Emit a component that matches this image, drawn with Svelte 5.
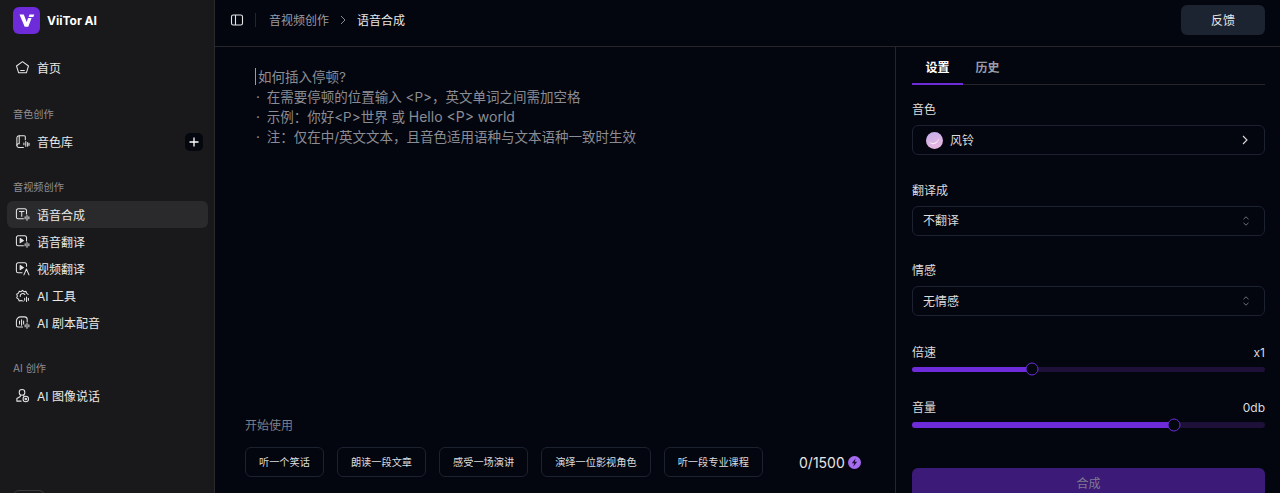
<script>
	const presets = ["听一个笑话", "朗读一段文章", "感受一场演讲", "演绎一位影视角色", "听一段专业课程"];
	const selects = [
		{ label: "翻译成", value: "不翻译" },
		{ label: "情感", value: "无情感" }
	];
	const sliders = [
		{ label: "倍速", value: "x1", pct: 34 },
		{ label: "音量", value: "0db", pct: 74.2 }
	];
	const tts = [
		{ name: "语音合成", icon: "T", active: true },
		{ name: "语音翻译", icon: "play" },
		{ name: "视频翻译", icon: "video" },
		{ name: "AI 工具", icon: "tool" },
		{ name: "AI 剧本配音", icon: "script" }
	];
</script>

<div class="app">
	<aside class="sidebar">
		<div class="brand">
			<div class="logo">
				<svg viewBox="0 0 27 27" width="27" height="27">
					<path d="M6.500 7.500h4.300l2.900 7.500 1.400-4h3.500l-3.300 8.800h-3.600z" fill="#fff" />
					<path d="M16.500 7.500h4.800l-.9 2.500h-4.800z" fill="#fff" />
				</svg>
			</div>
			<span class="brand-name">ViiTor AI</span>
		</div>

		<nav class="nav home">
			<div class="item">
				<svg class="ico" viewBox="0 0 16 16"><path d="M8 1.800l6.400 4.600-2.300 7.300H3.900L1.600 6.400z" /><path d="M6 11.300h4" /></svg>
				<span>首页</span>
			</div>
		</nav>

		<div class="section first-section">音色创作</div>
		<nav class="nav">
			<div class="item">
				<svg class="ico" viewBox="0 0 16 16"><path d="M11 6V3a1.200 1.200 0 0 0-1.200-1.200H4.500A2.500 2.500 0 0 0 2 4.300v8a2 2 0 0 0 2 2h5" /><path d="M4.500 2v8.500H3.500A1.500 1.500 0 0 0 2 12" /><path d="M9.500 9.500v2M11.500 8v5M13.500 9v4M15 10v2" /></svg>
				<span>音色库</span>
				<span class="plus">
					<svg viewBox="0 0 10 10" width="10" height="10"><path d="M5 .5v9M.5 5h9" stroke="#fff" stroke-width="1.300" /></svg>
				</span>
			</div>
		</nav>

		<div class="section">音视频创作</div>
		<nav class="nav">
			{#each tts as t}
				<div class="item" class:active={t.active}>
					<svg class="ico" viewBox="0 0 16 16">
						{#if t.icon === "T"}
							<path d="M9 12.500H3.300a1.800 1.800 0 0 1-1.800-1.800v-7A1.800 1.800 0 0 1 3.300 1.900h7.200a1.800 1.800 0 0 1 1.800 1.800v3.800" />
							<path d="M4.800 4.800h4.800M7.200 4.800v5" />
							<path d="M10.800 10.500v2M12.800 9v5M14.800 10.500v2" />
						{:else if t.icon === "play"}
							<path d="M9 12.500H3.300a1.800 1.800 0 0 1-1.800-1.800v-7A1.800 1.800 0 0 1 3.300 1.900h7.200a1.800 1.800 0 0 1 1.800 1.800v3.800" />
							<path d="M5.500 4.800v4.400L9 7z" fill="#e6e6e6" />
							<path d="M10.800 10.500v2M12.800 9v5M14.800 10.500v2" />
						{:else if t.icon === "video"}
							<path d="M7.500 12.500H3.300a1.800 1.800 0 0 1-1.800-1.800v-7A1.800 1.800 0 0 1 3.300 1.900h7.200a1.800 1.800 0 0 1 1.800 1.800v2" />
							<path d="M5.500 4.800v4.400L9 7z" fill="#e6e6e6" />
							<path d="M9.500 14.800l2.700-6.300 2.700 6.300" />
						{:else if t.icon === "tool"}
							<path d="M8.800 14l-2.300-.6-2 .4-.8-2-1.900-1.200.7-2-.7-2L3.700 5.500l.8-2 2 .4L8 2.500l1.500 1.400 2.200-.3.800 2.100 1.500 1.200" />
							<path d="M5.500 9a2.800 2.800 0 0 1 5-2" />
							<path d="M10.300 11v2M12.300 9.500v5M14.300 11v2" />
						{:else}
							<path d="M8 12.800H3.300a1.800 1.800 0 0 1-1.800-1.800V6.500A4.500 4.500 0 0 1 6 2h4.200a2.800 2.800 0 0 1 2.800 2.800v2.700" />
							<path d="M4.800 6.500v3M7 5v6M9.200 6.500v3" />
							<path d="M10.800 10.500v2M12.800 9v5M14.800 10.500v2" />
						{/if}
					</svg>
					<span>{t.name}</span>
				</div>
			{/each}
		</nav>

		<div class="section">AI 创作</div>
		<nav class="nav">
			<div class="item">
				<svg class="ico" viewBox="0 0 16 16"><circle cx="7.500" cy="4.700" r="3" /><path d="M5.700 7.600v1.500L2 11.200v2.800h4.500" /><path d="M9.300 7.600v1" /><circle cx="11.500" cy="11.800" r="2.900" /><circle cx="11.500" cy="11.800" r=".8" /></svg>
				<span>AI 图像说话</span>
			</div>
		</nav>

		<div class="stub"></div>
	</aside>

	<div class="content">
		<header class="topbar">
			<svg class="toggle" viewBox="0 0 14 14" width="14" height="14"><rect x="1.500" y="2" width="11" height="10" rx="1.800" /><path d="M5.500 2v10" /></svg>
			<span class="vsep"></span>
			<span class="crumb">音视频创作</span>
			<svg class="crumb-arrow" viewBox="0 0 8 10" width="8" height="10"><path d="M2 1l4 4-4 4" /></svg>
			<span class="crumb current">语音合成</span>
			<button class="feedback">反馈</button>
		</header>

		<div class="body">
			<main class="editor">
				<div class="placeholder">
					<div class="first"><i class="caret"></i>如何插入停顿?</div>
					<div><span class="dot">·</span> 在需要停顿的位置输入 &lt;P&gt;，英文单词之间需加空格</div>
					<div><span class="dot">·</span> 示例：你好&lt;P&gt;世界 或 <span class="latin">Hello &lt;P&gt; world</span></div>
					<div><span class="dot">·</span> 注：仅在中/英文文本，且音色适用语种与文本语种一致时生效</div>
				</div>

				<div class="start">
					<div class="start-title">开始使用</div>
					<div class="start-row">
						{#each presets as p}
							<button class="preset">{p}</button>
						{/each}
						<div class="counter">
							<span>0/1500</span>
							<span class="bolt">
								<svg viewBox="0 0 14 14" width="13" height="13"><circle cx="7" cy="7" r="7" fill="#a56cf0" /><path d="M8.300 2.500L4.200 7.800h2.500L5.700 11.500l4.100-5.300H7.300z" fill="#1c1030" /></svg>
							</span>
						</div>
					</div>
				</div>
			</main>

			<section class="panel">
				<div class="tabs">
					<div class="tab on">设置</div>
					<div class="tab">历史</div>
				</div>

				<div class="field voice">
					<div class="label">音色</div>
					<div class="box">
						<span class="avatar">
							<svg viewBox="0 0 17 17" width="17" height="17"><path d="M3 9.500c2 1.500 4 1.800 5.500 1.300 2-.8 3.500-2.500 5-4.800-1 3.500-3 5.800-5.500 6.300-2 .3-4-.8-5-2.800z" fill="#f6e6f6" /></svg>
						</span>
						<span class="box-text">风铃</span>
						<svg class="chev" viewBox="0 0 8 10" width="8" height="10"><path d="M2 1l4 4-4 4" /></svg>
					</div>
				</div>

				{#each selects as s}
					<div class="field">
						<div class="label">{s.label}</div>
						<div class="box select">
							<span class="box-text">{s.value}</span>
							<svg class="updown" viewBox="0 0 8 12" width="8" height="12"><path d="M1.500 4.200L4 1.800l2.500 2.400M1.500 7.800L4 10.200l2.500-2.400" /></svg>
						</div>
					</div>
				{/each}

				{#each sliders as s}
					<div class="slider">
						<div class="slider-head"><span>{s.label}</span><span>{s.value}</span></div>
						<div class="track">
							<div class="fill" style="width: {s.pct}%"></div>
							<div class="thumb" style="left: {s.pct}%"></div>
						</div>
					</div>
				{/each}

				<button class="submit">合成</button>
			</section>
		</div>
	</div>
</div>

<style>
	:global(body) {
		margin: 0;
		background: #03050f;
		overflow: hidden;
	}
	.app {
		display: flex;
		height: 493px;
		overflow: hidden;
		font-family: Inter, "Noto Sans CJK SC", sans-serif;
		color: #e6e6e6;
		font-size: 12px;
	}
	button {
		font-family: inherit;
	}
	.sidebar {
		width: 215px;
		flex: none;
		background: #19191b;
		border-right: 1px solid #2a2a2d;
		padding: 0 6px 0 7px;
		box-sizing: border-box;
		display: flex;
		flex-direction: column;
		position: relative;
	}
	.brand {
		display: flex;
		align-items: center;
		gap: 7px;
		padding: 7px 6px 0;
		height: 27px;
	}
	.logo {
		width: 27px;
		height: 27px;
		border-radius: 6px;
		background: #6d2bd9;
	}
	.logo svg {
		display: block;
	}
	.brand-name {
		font-size: 12px;
		font-weight: 700;
		color: #fff;
	}
	.home {
		margin-top: 20px;
	}
	.section {
		font-size: 10.200px;
		color: #8f8f94;
		line-height: 16px;
		padding-left: 6px;
		margin-top: 24px;
		margin-bottom: 6px;
	}
	.first-section {
		margin-top: 25px;
	}
	.nav {
		display: flex;
		flex-direction: column;
	}
	.item {
		display: flex;
		align-items: center;
		height: 27px;
		padding-left: 8px;
		border-radius: 6px;
		color: #e8e8e8;
		font-size: 12px;
	}
	.item.active {
		background: #2a2a2c;
	}
	.ico {
		width: 15px;
		height: 15px;
		margin-right: 7px;
		fill: none;
		stroke: #e6e6e6;
		stroke-width: 1.100;
		stroke-linecap: round;
		stroke-linejoin: round;
		flex: none;
	}
	.plus {
		margin-left: auto;
		margin-right: 5px;
		width: 18px;
		height: 18px;
		border-radius: 5px;
		background: #05070f;
		display: flex;
		align-items: center;
		justify-content: center;
	}
	.stub {
		position: absolute;
		left: 13px;
		top: 490px;
		width: 32px;
		height: 20px;
		border: 1px solid #3a3a3d;
		border-radius: 6px;
		box-sizing: border-box;
	}
	.content {
		flex: 1;
		min-width: 0;
		display: flex;
		flex-direction: column;
	}
	.topbar {
		height: 47px;
		flex: none;
		box-sizing: border-box;
		border-bottom: 1px solid #26262a;
		display: flex;
		align-items: center;
		padding: 0 15px 6px 15px;
	}
	.toggle {
		fill: none;
		stroke: #e6e6e6;
		stroke-width: 1.100;
	}
	.vsep {
		width: 1px;
		height: 14px;
		background: #26262a;
		margin: 0 13px 0 11px;
	}
	.crumb {
		color: #9a9ca5;
		font-size: 12px;
		padding-bottom: 2px;
	}
	.crumb.current {
		color: #e8e8e8;
	}
	.crumb-arrow {
		margin: 0 10px;
		fill: none;
		stroke: #8a8c94;
		stroke-width: 1;
	}
	.feedback {
		margin-left: auto;
		width: 84px;
		height: 30px;
		border: 0;
		border-radius: 6px;
		padding: 0 0 2px;
		background: #1c2431;
		color: #e6e6e6;
		font-size: 12px;
	}
	.body {
		flex: 1;
		min-height: 0;
		display: flex;
	}
	.editor {
		width: 680px;
		flex: none;
		box-sizing: border-box;
		padding: 20px 30px 0 30px;
		display: flex;
		flex-direction: column;
	}
	.placeholder {
		color: #8b8d94;
		font-size: 13.500px;
		line-height: 20px;
		padding-left: 11px;
	}
	.dot {
		margin-right: 3px;
	}
	.latin {
		font-size: 14px;
	}
	.first {
		position: relative;
		margin-left: 2px;
	}
	.caret {
		position: absolute;
		left: -3px;
		top: 1px;
		width: 1px;
		height: 17px;
		background: #9a9ca5;
	}
	.start {
		margin-top: auto;
		padding-bottom: 16px;
	}
	.start-title {
		font-size: 12px;
		color: #7d7f87;
		line-height: 18px;
		margin-bottom: 12px;
	}
	.start-row {
		display: flex;
		align-items: center;
		gap: 13px;
	}
	.preset {
		height: 30px;
		padding: 0 13px 1px;
		background: transparent;
		border: 1px solid #1d2230;
		border-radius: 6px;
		color: #dcdcdc;
		font-size: 10.200px;
		white-space: nowrap;
	}
	.counter {
		margin-left: 23px;
		display: flex;
		align-items: center;
		gap: 3px;
		font-size: 14px;
		color: #e6e6e6;
	}
	.bolt svg {
		display: block;
	}
	.panel {
		flex: 1;
		min-width: 0;
		box-sizing: border-box;
		border-left: 1px solid #26262a;
		padding: 0 15px 0 16px;
	}
	.tabs {
		display: flex;
		height: 38px;
		box-sizing: border-box;
		border-bottom: 1px solid #26262a;
		margin-bottom: 16px;
	}
	.tab {
		width: 49px;
		text-align: center;
		line-height: 41px;
		height: 38px;
		box-sizing: border-box;
		font-size: 12px;
		font-weight: 600;
		color: #9a9ca5;
	}
	.tab.on {
		width: 51px;
		color: #fff;
		border-bottom: 2px solid #6d2bd9;
	}
	.field {
		margin-bottom: 26.500px;
	}
	.label {
		font-size: 12px;
		line-height: 18px;
		color: #dcdcdc;
		margin-bottom: 6px;
	}
	.box {
		height: 30px;
		box-sizing: border-box;
		border: 1px solid #1d2230;
		border-radius: 6px;
		display: flex;
		align-items: center;
		padding: 0 10px;
		font-size: 12px;
		color: #dcdcdc;
	}
	.box-text {
		padding-bottom: 2px;
	}
	.voice .box {
		padding-left: 13px;
	}
	.avatar {
		width: 17px;
		height: 17px;
		border-radius: 50%;
		overflow: hidden;
		background: linear-gradient(160deg, #c3aeea, #eeb8de);
		margin-right: 7px;
	}
	.avatar svg {
		display: block;
	}
	.chev {
		margin-left: auto;
		margin-right: 5px;
		fill: none;
		stroke: #dcdcdc;
		stroke-width: 1.100;
	}
	.updown {
		margin-left: auto;
		margin-right: 4px;
		fill: none;
		stroke: #6f7178;
		stroke-width: 1;
	}
	.slider {
		margin-bottom: 26px;
	}
	.slider-head {
		display: flex;
		justify-content: space-between;
		font-size: 12px;
		line-height: 18px;
		color: #dcdcdc;
		padding-top: 1px;
		margin-bottom: 5px;
	}
	.track {
		height: 5.500px;
		background: #1d1039;
		border-radius: 3px;
		position: relative;
	}
	.fill {
		height: 100%;
		background: #6d2bd9;
		border-radius: 3px;
	}
	.thumb {
		position: absolute;
		top: 50%;
		width: 13px;
		height: 13px;
		box-sizing: border-box;
		border: 1px solid #6d2bd9;
		border-radius: 50%;
		background: #03050f;
		transform: translate(-50%, -50%);
	}
	.submit {
		display: block;
		width: 100%;
		height: 30px;
		margin-top: 40px;
		padding: 0 0 1px;
		border: 0;
		border-radius: 6px;
		background: #3c1a78;
		color: #7f7a8f;
		font-size: 12px;
	}
</style>
